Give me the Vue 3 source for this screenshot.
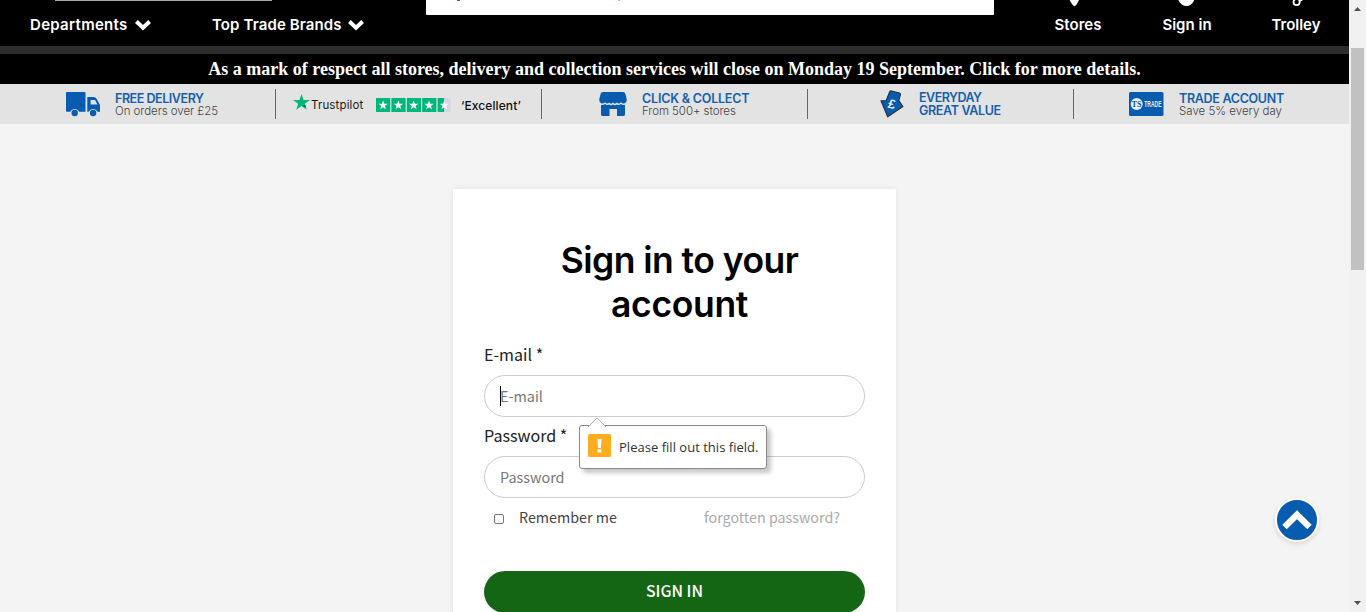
<script setup>
const actions = ['Stores', 'Sign in', 'Trolley']
const star = 'M0-5.2 1.25-1.7 5-1.6 2 .7 3.1 4.3 0 2.1-3.1 4.3-2 .7-5-1.6-1.25-1.7Z'
</script>

<template>
  <div class="window">
    <div class="page">
      <header class="header">
        <i class="search-edge"></i>
        <a class="nav nav-departments">Departments</a>
        <svg class="chevron" width="16" height="12" viewBox="0 0 16 12"><path d="M1.4 2.5 8 8.7 14.6 2.5" fill="none" stroke="#fff" stroke-width="4" /></svg>
        <a class="nav nav-brands">Top Trade Brands</a>
        <svg class="chevron" width="16" height="12" viewBox="0 0 16 12"><path d="M1.4 2.5 8 8.7 14.6 2.5" fill="none" stroke="#fff" stroke-width="4" /></svg>
        <div class="panel"><i class="mark mark-dark"></i><i class="mark mark-light"></i></div>
        <div class="actions">
          <a v-for="(a, i) in actions" :key="a" class="action">
            <svg class="action-icon" width="22" height="7" viewBox="0 0 22 7">
              <path v-if="i === 0" d="M3.6 0H13Q10.5 5.8 8.3 6.2 6 5 3.6 0Z" fill="#fff" />
              <path v-else-if="i === 1" d="M3.3 0H19.3C16 8 7 8 3.3 0Z" fill="#fff" />
              <g v-else fill="none" stroke="#fff" stroke-width="1.8"><circle cx="12.6" cy="2" r="3.1" /><path d="M15.3 1 18.3-.3" /></g>
            </svg>
            <span>{{ a }}</span>
          </a>
        </div>
      </header>
      <div class="strip"></div>
      <div class="notice">As a mark of respect all stores, delivery and collection services will close on Monday 19 September. Click for more details.</div>

      <section class="usps">
        <div class="usp delivery">
          <svg width="35" height="26" viewBox="0 0 35 26">
            <path d="M1 1H18.6Q19.5 1 19.5 2V20.8H13.2A5 5 0 0 0 4.2 20.8H1Q0 20.8 0 20V2Q0 1 1 1ZM21.3 6H27.6Q29.5 6 30.7 8L34 14V20.8H31.6A5 5 0 0 0 22.6 20.8H21.3ZM24.6 9V13.5H31.4L29 9Z" fill="#085cb0" fill-rule="evenodd" />
            <circle cx="8.7" cy="22" r="3.2" fill="#085cb0" /><circle cx="27.1" cy="22" r="3.2" fill="#085cb0" />
          </svg>
          <div class="copy"><b class="t-delivery">FREE DELIVERY</b><span class="s-delivery">On orders over £25</span></div>
        </div>
        <div class="usp trust">
          <svg width="17" height="16" viewBox="0 0 17 16"><path d="M8.5 0 10.5 6H17L11.8 9.7 13.8 15.8 8.5 12 3.2 15.8 5.2 9.7 0 6H6.5Z" fill="#00b67a" /><path d="M12.2 10.9 12.9 13 9.2 12Z" fill="#005128" /></svg>
          <span class="trust-name">Trustpilot</span>
          <svg class="rating" width="75" height="14" viewBox="0 0 75 14">
            <rect x="62" width="12.5" height="14" fill="#d6d5e3" />
            <rect v-for="n in 4" :key="n" :x="(n - 1) * 15.4" width="14.2" height="14" fill="#00b67a" />
            <rect x="61.6" width="6.5" height="14" fill="#00b67a" />
            <path v-for="n in 5" :key="'s' + n" :d="star" :transform="`translate(${(n - 1) * 15.3 + 7.1} 7.3) scale(.93)`" fill="#fff" />
          </svg>
          <span class="excellent">‘Excellent’</span>
        </div>
        <div class="usp collect">
          <svg width="28" height="26" viewBox="0 0 28 26">
            <path d="M4 1H24Q26 1 26.4 3L27.8 8.5Q28 11 25.8 12.3 23.5 13 22 11.2 20 13.5 17.9 11.6 16 13.7 14 11.6 12 13.7 10.1 11.6 8 13.5 6 11.2 4.5 13 2.2 12.3 0 11 .2 8.5L1.6 3Q2 1 4 1Z" fill="#085cb0" />
            <path d="M2 13.8Q4 14.4 6 13.1 8 14.7 10 13.5 12 15 14 13.5 16 15 18 13.5 20 14.7 22 13.1 24 14.4 26 13.8V23.5Q26 25 24.5 25H18V18H10.5V25H3.5Q2 25 2 23.5Z" fill="#085cb0" />
          </svg>
          <div class="copy"><b class="t-collect">CLICK &amp; COLLECT</b><span class="s-collect">From 500+ stores</span></div>
        </div>
        <div class="usp value">
          <svg width="24" height="28" viewBox="0 0 24 28">
            <path d="M6.2 10.5 9.7 1.8Q10.1.7 11.5 1L19.7 3.2Q20.7 3.6 20.4 4.6L18.8 10.6 22.9 16.5 7.7 26.8 1 10.8Z" fill="#085cb0" stroke="#263645" stroke-width="1.2" stroke-linejoin="round" />
            <text x="8.2" y="18.2" transform="rotate(14 11 14)" class="pound">£</text>
          </svg>
          <div class="copy"><b class="t-everyday">EVERYDAY</b><b class="t-value">GREAT VALUE</b></div>
        </div>
        <div class="usp trade">
          <svg class="trade-card" width="36" height="24" viewBox="0 0 36 24">
            <rect width="34.5" height="24" rx="1.5" fill="#085cb0" /><circle cx="7.7" cy="12" r="6" fill="#e8eef5" />
            <text x="2.6" y="14.9" textLength="10" lengthAdjust="spacingAndGlyphs" class="ts">TS</text>
            <text x="15.3" y="15.2" textLength="17.3" lengthAdjust="spacingAndGlyphs" class="trade-word">TRADE</text>
          </svg>
          <div class="copy"><b class="t-trade">TRADE ACCOUNT</b><span class="s-trade">Save 5% every day</span></div>
        </div>
      </section>

      <main class="card">
        <h1><span class="first">Sign in to your</span><span class="second">account</span></h1>
        <label>E-mail *</label>
        <div class="field email">
          <i class="caret"></i><span>E-mail</span>
          <div class="tooltip">
            <svg class="tip" width="18" height="10" viewBox="0 0 18 10"><path d="M0 10 9 .8 18 10" fill="#fff" stroke="#aaa" /></svg>
            <svg width="23" height="23" viewBox="0 0 23 23"><rect width="23" height="23" rx="1.5" fill="#ffad1f" /><path d="M9.5 5H13.5L13 14H10ZM9.6 15.3H13.4V18.6H9.6Z" fill="#fff" /></svg>
            <span>Please fill out this field.</span>
          </div>
        </div>
        <label class="label-password">Password *</label>
        <div class="field"><span>Password</span></div>
        <div class="options"><i class="box"></i><span class="remember">Remember me</span><a>forgotten password?</a></div>
        <button>SIGN IN</button>
      </main>

      <div class="top-button">
        <svg width="44" height="44" viewBox="0 0 44 44"><circle cx="22" cy="22" r="21" fill="#085cb0" stroke="#fff" stroke-width="2" /><path d="M9.5 29 22 16.7 34.5 29" fill="none" stroke="#fff" stroke-width="6.3" /></svg>
      </div>
    </div>
    <div class="scrollbar">
      <svg class="up" width="7" height="4" viewBox="0 0 7 4"><path d="M0 4 3.5 0 7 4Z" fill="#505050" /></svg>
      <i class="thumb"></i>
      <svg class="down" width="7" height="4" viewBox="0 0 7 4"><path d="M0 0 3.5 4 7 0Z" fill="#505050" /></svg>
    </div>
  </div>
</template>

<style>
body { margin: 0; overflow: hidden; }
</style>

<style scoped>
* { box-sizing: border-box; }
svg { display: block; flex: none; }
.window { display: flex; width: 1366px; height: 612px; overflow: hidden; }
.page { position: relative; width: 1349px; height: 612px; overflow: hidden; background: #f4f4f4; font-family: Inter, "Liberation Sans", sans-serif; }
.header { position: relative; display: flex; align-items: flex-start; height: 46px; padding-left: 30px; background: #000; color: #fff; font-size: 15px; font-weight: 600; line-height: 20px; white-space: nowrap; }
.search-edge { position: absolute; left: 55px; top: 0; width: 217px; height: 1px; background: #aaa; }
.nav { flex: none; margin-top: 15px; }
.nav-departments { width: 105px; letter-spacing: .3px; }
.nav-brands { width: 136px; margin-left: 61px; letter-spacing: .13px; }
.chevron { margin-top: 19px; }
.panel { position: relative; flex: none; width: 568px; height: 15px; margin-left: 62px; background: #fff; border-radius: 0 0 1px 1px; }
.mark { position: absolute; top: 0; width: 3px; height: 1px; }
.mark-dark { left: 31px; background: #3568b5; }
.mark-light { left: 192px; width: 2px; background: #8fc8ee; }
.actions { display: flex; flex: none; margin-left: 29.5px; }
.action { position: relative; flex: none; width: 109px; padding-top: 15px; text-align: center; }
.action-icon { position: absolute; left: 42px; top: 0; }
.strip { height: 8px; background: #2d2d2d; }
.notice { height: 30px; background: #000; color: #fff; font: bold 18px/31px "Liberation Serif", serif; text-align: center; white-space: nowrap; }
.usps { display: flex; height: 40px; padding-left: 10px; background: #e3e3e3; }
.usp { position: relative; display: flex; align-items: flex-start; flex: none; width: 266px; height: 30px; margin-top: 5px; padding-top: 2px; white-space: nowrap; border-right: 1px solid #666; }
.copy { display: flex; flex-direction: column; padding-top: 1px; font-size: 12px; line-height: 13px; color: #444; }
.copy b { color: #1560ad; font-weight: 600; font-size: 12.5px; }
.copy span { font-size: 11.5px; font-weight: 300; }
.t-delivery { letter-spacing: -.45px; }
.t-collect { letter-spacing: -.2px; }
.t-everyday { letter-spacing: -.5px; }
.t-value { letter-spacing: -.35px; }
.t-trade { letter-spacing: -.3px; }
.s-delivery, .s-collect { letter-spacing: -.06px; }
.delivery { padding-left: 56px; }
.delivery .copy { margin-left: 14px; }
.trust { padding: 5px 0 0 17px; }
.trust-name { margin: 4px 0 0 1px; width: 65px; font-size: 11.5px; line-height: 15px; color: #191919; letter-spacing: .15px; }
.rating { margin-top: 4px; }
.excellent { margin: 4px 0 0 10px; font-size: 12px; line-height: 15px; font-weight: 500; color: #111; letter-spacing: .1px; }
.collect { padding-left: 57px; }
.collect .copy { margin-left: 15px; }
.value { padding: 1px 0 0 72px; }
.value .copy { margin-left: 15px; padding-top: 1px; }
.trade { padding: 3px 0 0 55px; border: 0; }
.trade .copy { margin: -1px 0 0 14px; }
.trade-card { overflow: visible; }
.pound { font: bold 13px "Liberation Sans", sans-serif; fill: #e8eef5; }
.ts { font: bold 8.5px "Liberation Serif", serif; fill: #085cb0; }
.trade-word { font: bold 8.5px "Liberation Sans", sans-serif; fill: #e8eef5; }
.card { width: 443px; height: 440px; margin: 65px 0 0 453px; padding: 50px 31px 0; background: #fff; box-shadow: 0 0 6px rgba(0,0,0,.08); font-family: "Noto Sans CJK SC", sans-serif; }
h1 { display: flex; flex-direction: column; margin: 0; height: 101px; font: 600 35.5px/44px Inter, sans-serif; color: #000; text-align: center; white-space: nowrap; padding-left: 10px; }
.first { letter-spacing: -.55px; }
.second { letter-spacing: -.35px; }
label { display: block; height: 35px; font-size: 16.1px; line-height: 28px; color: #222; }
.field { position: relative; display: flex; align-items: center; width: 381px; height: 42px; padding-left: 16px; border: 1px solid #ccc; border-radius: 21px; font-size: 14.4px; color: #777; }
.field > span { margin: -1px 0 0 -1px; }
.caret { position: absolute; left: 15px; top: 10px; width: 1px; height: 20px; background: #000; }
.label-password { height: 39px; padding-top: 4px; }
.tooltip { position: absolute; z-index: 2; left: 94px; top: 49px; width: 188px; height: 44px; display: flex; align-items: center; padding: 0 0 1px 8px; border: 1px solid #888; border-radius: 3px; background: #fff; box-shadow: 4px 4px 4px rgba(0,0,0,.22); color: #333; white-space: nowrap; }
.tooltip > svg:not(.tip) { margin-top: -2px; }
.tooltip > span { margin: 1px 0 0 8px; font: 13px/20px "Open Sans", sans-serif; letter-spacing: .02px; }
.tip { position: absolute; left: 8px; top: -9px; }
.options { display: flex; align-items: center; height: 41px; padding-left: 10px; font-size: 14.3px; color: #444; white-space: nowrap; }
.box { width: 10px; height: 10px; border: 1px solid #777; border-radius: 2px; }
.remember { width: 185px; margin: -4px 0 0 15px; }
.options a { margin-top: -4px; color: #aaa; }
button { display: block; width: 381px; height: 42px; margin-top: 32px; padding: 0 0 2px; border: 0; border-radius: 21px; background: #146614; color: #fff; font: 500 15.8px/40px "Noto Sans CJK SC", sans-serif; }
.top-button { position: absolute; left: 1275px; top: 498px; width: 44px; height: 44px; border-radius: 50%; box-shadow: 0 2px 5px rgba(0,0,0,.12); }
.scrollbar { position: relative; width: 17px; height: 612px; background: #f1f1f1; }
.up { position: absolute; left: 5px; top: 7px; }
.down { position: absolute; left: 5px; bottom: 7px; }
.thumb { position: absolute; left: 2px; top: 48px; width: 13px; height: 222px; background: #c1c1c1; }
</style>
